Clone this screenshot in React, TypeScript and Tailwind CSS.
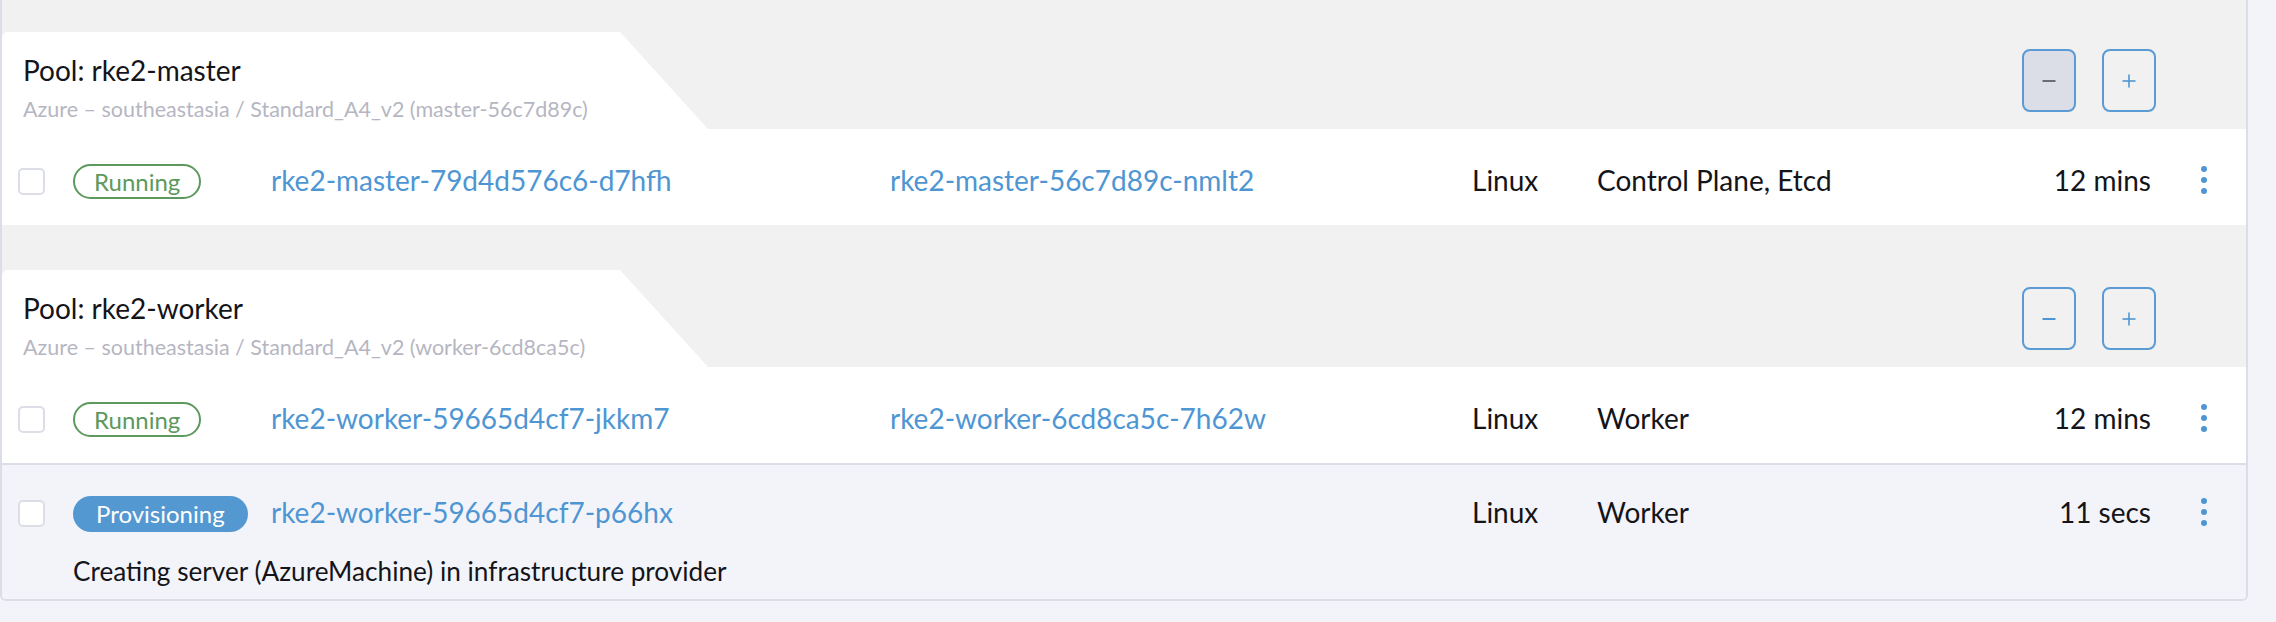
import React from "react";

type MachineRow = {
  state: "Running" | "Provisioning";
  name: string;
  node: string;
  os: string;
  roles: string;
  age: string;
  message?: string;
};

type Pool = {
  name: string;
  detail: string;
  minusDisabled?: boolean;
  rows: MachineRow[];
};

const POOLS: Pool[] = [
  {
    name: "rke2-master",
    detail: "Azure – southeastasia / Standard_A4_v2 (master-56c7d89c)",
    minusDisabled: true,
    rows: [
      {
        state: "Running",
        name: "rke2-master-79d4d576c6-d7hfh",
        node: "rke2-master-56c7d89c-nmlt2",
        os: "Linux",
        roles: "Control Plane, Etcd",
        age: "12 mins",
      },
    ],
  },
  {
    name: "rke2-worker",
    detail: "Azure – southeastasia / Standard_A4_v2 (worker-6cd8ca5c)",
    rows: [
      {
        state: "Running",
        name: "rke2-worker-59665d4cf7-jkkm7",
        node: "rke2-worker-6cd8ca5c-7h62w",
        os: "Linux",
        roles: "Worker",
        age: "12 mins",
      },
      {
        state: "Provisioning",
        name: "rke2-worker-59665d4cf7-p66hx",
        node: "",
        os: "Linux",
        roles: "Worker",
        age: "11 secs",
        message: "Creating server (AzureMachine) in infrastructure provider",
      },
    ],
  },
];

function Checkbox() {
  return <span className="mt-[4px] ml-[16px] block h-[27px] w-[27px] rounded-[5px] border-2 border-[#dcdee7] bg-white" />;
}

function StateBadge({ state }: { state: MachineRow["state"] }) {
  if (state === "Running") {
    return (
      <span className="inline-flex h-[35px] items-center rounded-full border-2 border-[#5d995d] px-[19px] text-[24px] leading-none text-[#5d995d]">
        {state}
      </span>
    );
  }
  return (
    <span className="inline-flex h-[36px] items-center rounded-full bg-[#5498d2] px-[23px] text-[24px] leading-none text-white">
      {state}
    </span>
  );
}

function Kebab() {
  return (
    <svg width="8" height="30" viewBox="0 0 8 30" className="block">
      <circle cx="4" cy="4" r="3" fill="#4e96d3" />
      <circle cx="4" cy="15" r="3" fill="#4e96d3" />
      <circle cx="4" cy="26" r="3" fill="#4e96d3" />
    </svg>
  );
}

function ScaleButton({ kind, disabled }: { kind: "minus" | "plus"; disabled?: boolean }) {
  const stroke = disabled ? "#6c6c76" : "#4e96d3";
  return (
    <button
      type="button"
      className={
        disabled
          ? "flex h-[63px] w-[54px] items-center justify-center rounded-[8px] border-2 border-[#5a9bd6] bg-[#dcdee7]"
          : "flex h-[63px] w-[54px] items-center justify-center rounded-[8px] border-2 border-[#5a9bd6] bg-transparent"
      }
    >
      <svg width="16" height="16" viewBox="0 0 16 16">
        <line x1="1.5" y1="8" x2="14.5" y2="8" stroke={stroke} strokeWidth={kind === "minus" ? 2 : 1.6} />
        {kind === "plus" ? <line x1="8" y1="1.5" x2="8" y2="14.5" stroke={stroke} strokeWidth={1.6} /> : null}
      </svg>
    </button>
  );
}

function Row({ row, bordered }: { row: MachineRow; bordered: boolean }) {
  const provisioning = row.state === "Provisioning";
  return (
    <div
      className={
        (provisioning ? "bg-[#f3f4f9] pb-[10px] " : "bg-white ") + (bordered ? "border-t-2 border-[#dcdee7]" : "")
      }
    >
      <div
        className={
          "grid grid-cols-[71px_198px_619px_582px_125px_1fr_auto_95px] items-center pt-[5px] text-[28px] " +
          (provisioning ? "h-[88px]" : "h-[96px]")
        }
      >
        <div>
          <Checkbox />
        </div>
        <div>
          <StateBadge state={row.state} />
        </div>
        <div className="whitespace-nowrap text-[#4e96d3]">{row.name}</div>
        <div className="whitespace-nowrap text-[#4e96d3]">{row.node}</div>
        <div>{row.os}</div>
        <div className="whitespace-nowrap">{row.roles}</div>
        <div className="whitespace-nowrap text-right">{row.age}</div>
        <div className="pl-[49px]">
          <Kebab />
        </div>
      </div>
      {row.message ? <div className="pl-[71px] text-[26.2px] leading-[36px]">{row.message}</div> : null}
    </div>
  );
}

function PoolGroup({ pool }: { pool: Pool }) {
  return (
    <div>
      <div className="flex items-center justify-between">
        <div className="h-[97px] w-[706px] rounded-tl-[6px] bg-white pt-[20px] pl-[21px] [clip-path:polygon(0_0,618px_0,100%_100%,0_100%)]">
          <div className="text-[28px] leading-[36px] text-[#141419]">Pool: {pool.name}</div>
          <div className="mt-[6px] text-[21.5px] leading-[30px] text-[#b6b6c2]">{pool.detail}</div>
        </div>
        <div className="mr-[90px] flex gap-[26px]">
          <ScaleButton kind="minus" disabled={pool.minusDisabled} />
          <ScaleButton kind="plus" />
        </div>
      </div>
      {pool.rows.map((row, i) => (
        <Row key={row.name} row={row} bordered={i > 0} />
      ))}
    </div>
  );
}

export default function App() {
  return (
    <div className="h-[622px] w-[2276px] overflow-hidden bg-[#f3f4f9] font-['Lato','Noto_Sans',sans-serif] text-[#141419]">
      <div className="w-[2248px] overflow-hidden rounded-b-[6px] border-x-2 border-b-2 border-[#dcdee7] bg-[#f1f1f1] pt-[32px]">
        <div className="flex flex-col gap-[45px]">
          {POOLS.map((pool) => (
            <PoolGroup key={pool.name} pool={pool} />
          ))}
        </div>
      </div>
    </div>
  );
}
